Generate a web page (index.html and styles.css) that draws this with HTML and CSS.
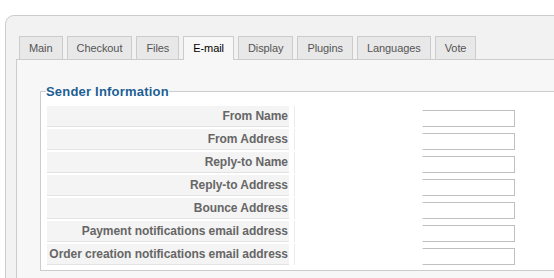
FILE: index.html
```html
<!DOCTYPE html>
<html lang="en">
<head>
    <meta charset="UTF-8">
    <title>Configuration - E-mail</title>
    <link rel="stylesheet" href="styles.css">
</head>
<body>
    <div class="box">
        <!-- Tabs -->
        <ul class="tabs">
            <li class="tab">Main</li>
            <li class="tab">Checkout</li>
            <li class="tab">Files</li>
            <li class="tab active">E-mail</li>
            <li class="tab">Display</li>
            <li class="tab">Plugins</li>
            <li class="tab">Languages</li>
            <li class="tab">Vote</li>
        </ul>

        <!-- Panel -->
        <div class="panel">
            <fieldset class="group">
                <legend class="group-title">Sender Information</legend>
                <div class="params">
                    <label class="key">From Name</label>
                    <div class="value"><input type="text" class="field"></div>

                    <label class="key">From Address</label>
                    <div class="value"><input type="text" class="field"></div>

                    <label class="key">Reply-to Name</label>
                    <div class="value"><input type="text" class="field"></div>

                    <label class="key">Reply-to Address</label>
                    <div class="value"><input type="text" class="field"></div>

                    <label class="key">Bounce Address</label>
                    <div class="value"><input type="text" class="field"></div>

                    <label class="key">Payment notifications email address</label>
                    <div class="value"><input type="text" class="field"></div>

                    <label class="key">Order creation notifications email address</label>
                    <div class="value"><input type="text" class="field"></div>
                </div>
            </fieldset>
        </div>
    </div>
</body>
</html>
```

FILE: styles.css
```css
* {
    box-sizing: border-box;
}

body {
    margin: 0;
    background: #fff;
    overflow: hidden;
    font-family: "Liberation Sans", Arial, sans-serif;
}

/* Outer box */
.box {
    margin: 15px 0 0 5px;
    width: 620px;
    height: 320px;
    padding: 20px 0 0 10px;
    background: #f2f2f2;
    border: 1px solid #ccc;
    border-radius: 9px 0 0 0;
}

/* Tabs */
.tabs {
    list-style: none;
    margin: 0 0 0 3px;
    padding: 0;
    display: flex;
    align-items: flex-end;
    gap: 4px;
}

.tab {
    position: relative;
    height: 23px;
    line-height: 22px;
    padding: 0 9px;
    font-size: 11px;
    letter-spacing: -0.08px;
    color: #555;
    background: #e8e8e8;
    border: 1px solid #ccc;
    border-bottom: none;
}

.tab.active {
    height: 24px;
    margin-bottom: -1px;
    color: #000;
    background: #f7f7f7;
    z-index: 1;
}

/* Panel */
.panel {
    height: 260px;
    padding: 24px 0 0 23px;
    background: #f7f7f7;
    border-top: 1px solid #ccc;
    border-left: 1px solid #ccc;
}

.group {
    margin: 0;
    padding: 7px 6px 5px 6px;
    background: #fff;
    border: 1px solid #ccc;
    border-right: none;
}

.group-title {
    margin-left: -1px;
    padding: 0;
    font-size: 13px;
    font-weight: bold;
    letter-spacing: 0.2px;
    color: #1d5f94;
}

.params {
    display: grid;
    grid-template-columns: 242px 1fr;
    column-gap: 5px;
    row-gap: 2px;
}

.key {
    height: 21px;
    line-height: 20px;
    padding-right: 1px;
    white-space: nowrap;
    overflow: hidden;
    text-align: right;
    font-size: 12px;
    font-weight: bold;
    letter-spacing: -0.05px;
    color: #666;
    background: #f4f4f4;
    border-bottom: 1px solid #e3e3e3;
}

.value {
    height: 21px;
    padding: 4px 0 0 127px;
    border-left: 1px solid #ebebeb;
}

.field {
    display: block;
    width: 93px;
    height: 17px;
    padding: 0;
    background: #fff;
    border: 1px solid #c0c0c0;
    border-left-color: #fff;
}
```
